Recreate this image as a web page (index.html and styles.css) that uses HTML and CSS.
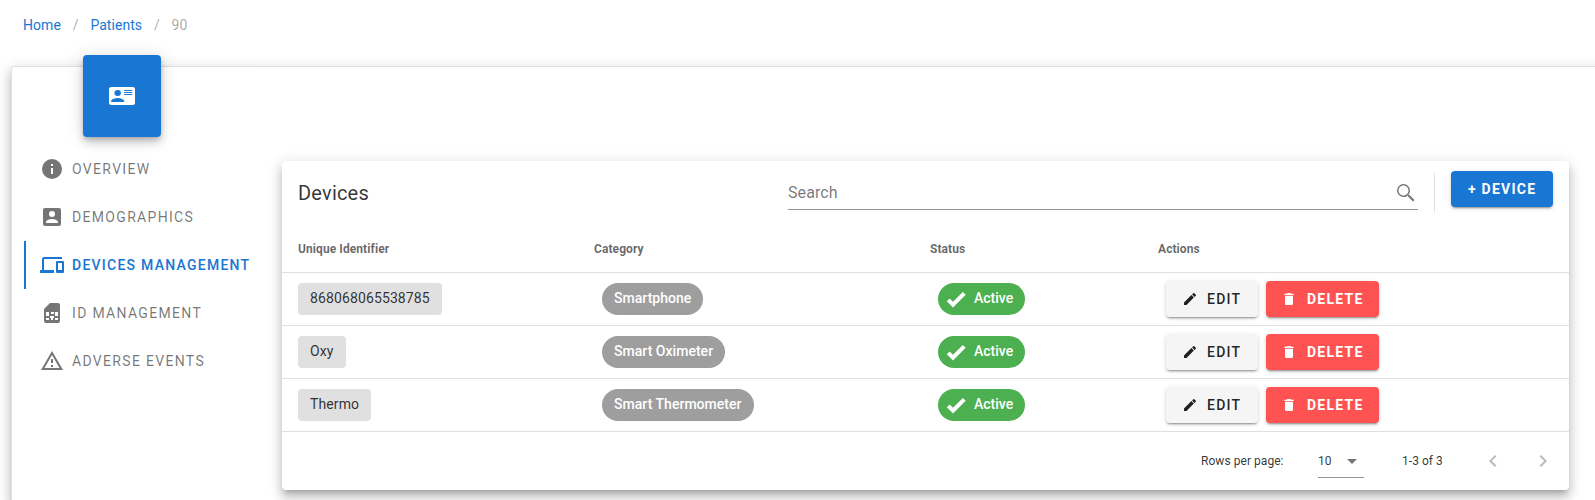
FILE: index.html
```
<!DOCTYPE html>
<html lang="en">
<head>
<meta charset="utf-8">
<title>Devices</title>
<link rel="stylesheet" href="styles.css">
</head>
<body>
<svg class="defs" aria-hidden="true">
  <symbol id="pencil" viewBox="0 0 24 24"><path d="M20.71,7.04C21.1,6.65 21.1,6 20.71,5.63L18.37,3.29C18,2.9 17.35,2.9 16.96,3.29L15.12,5.12L18.87,8.87M3,17.25V21H6.75L17.81,9.93L14.06,6.18L3,17.25Z"/></symbol>
  <symbol id="trash" viewBox="0 0 24 24"><path d="M19,4H15.5L14.5,3H9.5L8.5,4H5V6H19M6,19A2,2 0 0,0 8,21H16A2,2 0 0,0 18,19V7H6V19Z"/></symbol>
  <symbol id="check" viewBox="0 0 24 24"><path d="M9,20.42L2.79,14.21L5.62,11.38L9,14.77L18.88,4.88L21.71,7.71L9,20.42Z"/></symbol>
</svg>
<nav class="crumbs"><a>Home</a><span class="sep">/</span><a>Patients</a><span class="sep">/</span><span class="here">90</span></nav>
<main class="sheet">
  <aside class="side">
    <div class="badge"><svg class="icon" viewBox="0 3 24 18" preserveAspectRatio="none"><path d="M22,3H2C0.91,3.04 0.04,3.91 0,5V19C0.04,20.09 0.91,20.96 2,21H22C23.09,20.96 23.96,20.09 24,19V5C23.96,3.91 23.09,3.04 22,3M8,6A3,3 0 0,1 11,9A3,3 0 0,1 8,12A3,3 0 0,1 5,9A3,3 0 0,1 8,6M14,18H2V17C2,15 6,13.9 8,13.9C10,13.9 14,15 14,17V18M22,12V12M21.5,11H14V10.1H21.5V11M21.5,9H14V8.1H21.5V9M21.5,7H14V6.1H21.5V7Z"/></svg></div>
    <div class="tabs">
      <div class="tab"><svg class="icon" viewBox="0 0 24 24"><path d="M13,9H11V7H13M13,17H11V11H13M12,2A10,10 0 0,0 2,12A10,10 0 0,0 12,22A10,10 0 0,0 22,12A10,10 0 0,0 12,2Z"/></svg>Overview</div>
      <div class="tab"><svg class="icon" viewBox="0 0 24 24"><path d="M6,17C6,15 10,13.9 12,13.9C14,13.9 18,15 18,17V18H6M15,9A3,3 0 0,1 12,12A3,3 0 0,1 9,9A3,3 0 0,1 12,6A3,3 0 0,1 15,9M3,5V19A2,2 0 0,0 5,21H19A2,2 0 0,0 21,19V5A2,2 0 0,0 19,3H5C3.89,3 3,3.9 3,5Z"/></svg>Demographics</div>
      <div class="tab active"><svg class="icon" viewBox="0 0 24 24"><path d="M4,6H22V4H4A2,2 0 0,0 2,6V17H0V20H14V17H4V6M23,8H17A1,1 0 0,0 16,9V19A1,1 0 0,0 17,20H23A1,1 0 0,0 24,19V9A1,1 0 0,0 23,8M22,17H18V10H22V17Z"/></svg>Devices Management</div>
      <div class="tab"><svg class="icon" viewBox="0 0 24 24"><path fill-rule="evenodd" d="M18,2H10L4,8V20A2,2 0 0,0 6,22H18A2,2 0 0,0 20,20V4A2,2 0 0,0 18,2M6,11H9V15H6M11,11H14V13H11M15,11H18V15H15M6,17H9V19H6M10,15H14V17H13V19H11V17H10M15,17H18V19H15Z"/></svg>ID Management</div>
      <div class="tab"><svg class="icon" viewBox="0 0 24 24"><path d="M12,2L1,21H23M12,6L19.53,19H4.47M11,10V14H13V10M11,16V18H13V16"/></svg>Adverse Events</div>
    </div>
  </aside>
  <section class="card">
    <header class="bar">
      <h1>Devices</h1>
      <div class="search"><span>Search</span><svg class="icon" viewBox="0 0 24 24"><path d="M9.5,3A6.5,6.5 0 0,1 16,9.5C16,11.11 15.41,12.59 14.44,13.73L14.71,14H15.5L20.5,19L19,20.5L14,15.5V14.71L13.73,14.44C12.59,15.41 11.11,16 9.5,16A6.5,6.5 0 0,1 3,9.5A6.5,6.5 0 0,1 9.5,3M9.5,4.5C6.8,4.5 4.5,6.8 4.5,9.5C4.5,12.2 6.8,14.5 9.5,14.5C12.2,14.5 14.5,12.2 14.5,9.5C14.5,6.8 12.2,4.5 9.5,4.5Z"/></svg></div>
      <div class="divider"></div>
      <div class="btn primary">+ Device</div>
    </header>
    <div class="row head"><div>Unique Identifier</div><div>Category</div><div>Status</div><div>Actions</div></div>
    <div class="row">
      <div><span class="chip label">868068065538785</span></div>
      <div><span class="chip kind">Smartphone</span></div>
      <div><span class="chip ok"><svg><use href="#check"/></svg>Active</span></div>
      <div class="acts"><span class="btn plain"><svg><use href="#pencil"/></svg>Edit</span><span class="btn danger"><svg><use href="#trash"/></svg>Delete</span></div>
    </div>
    <div class="row">
      <div><span class="chip label">Oxy</span></div>
      <div><span class="chip kind">Smart Oximeter</span></div>
      <div><span class="chip ok"><svg><use href="#check"/></svg>Active</span></div>
      <div class="acts"><span class="btn plain"><svg><use href="#pencil"/></svg>Edit</span><span class="btn danger"><svg><use href="#trash"/></svg>Delete</span></div>
    </div>
    <div class="row">
      <div><span class="chip label">Thermo</span></div>
      <div><span class="chip kind">Smart Thermometer</span></div>
      <div><span class="chip ok"><svg><use href="#check"/></svg>Active</span></div>
      <div class="acts"><span class="btn plain"><svg><use href="#pencil"/></svg>Edit</span><span class="btn danger"><svg><use href="#trash"/></svg>Delete</span></div>
    </div>
    <footer class="foot">
      <span class="per">Rows per page:</span>
      <span class="select">10<svg class="icon" viewBox="0 0 24 24"><path d="M7,10L12,15L17,10H7Z"/></svg></span>
      <span class="range">1-3 of 3</span>
      <svg class="icon nav" viewBox="0 0 24 24"><path d="M15.41,16.58L10.83,12L15.41,7.41L14,6L8,12L14,18L15.41,16.58Z"/></svg>
      <svg class="icon nav" viewBox="0 0 24 24"><path d="M8.59,16.58L13.17,12L8.59,7.41L10,6L16,12L10,18L8.59,16.58Z"/></svg>
    </footer>
  </section>
</main>
</body>
</html>
```
FILE: styles.css
```
* { box-sizing: border-box; }
body {
  margin: 0;
  height: 500px;
  overflow: hidden;
  background: #fff;
  color: rgba(0, 0, 0, .8);
  font: 14px/20px Roboto, sans-serif;
}
svg { fill: currentColor; flex: none; }
.defs { display: none; }
.icon { width: 24px; height: 24px; }
.crumbs { display: flex; height: 66px; padding: 15px 23px 0; color: #1976d2; letter-spacing: .05px; }
.crumbs .sep { width: 29.5px; text-align: center; color: rgba(0, 0, 0, .36); }
.crumbs .here { color: rgba(0, 0, 0, .36); }
.sheet {
  display: flex;
  height: 434px;
  margin-left: 11px;
  margin-right: -20px;
  border: 1px solid rgba(0, 0, 0, .12);
  border-bottom: 0;
  border-radius: 4px 4px 0 0;
  background: #fff;
  box-shadow: 0 5px 5px -3px rgba(0, 0, 0, .2), 0 8px 10px 1px rgba(0, 0, 0, .14), 0 3px 14px 2px rgba(0, 0, 0, .12);
}
.side { width: 270px; flex: none; }
.badge {
  display: flex;
  align-items: center;
  justify-content: center;
  width: 78px;
  height: 82px;
  margin: -12px 0 0 71px;
  border-radius: 4px;
  background: #1976d2;
  color: #fff;
  box-shadow: 0 3px 5px -1px rgba(0, 0, 0, .2), 0 6px 10px rgba(0, 0, 0, .14), 0 1px 18px rgba(0, 0, 0, .12);
}
.badge .icon { width: 26px; height: 18px; }
.tabs { margin: 8px 0 0 12px; }
.tab {
  display: flex;
  align-items: center;
  gap: 8px;
  height: 48px;
  padding-left: 14px;
  border-left: 2px solid transparent;
  color: rgba(0, 0, 0, .54);
  font-weight: 400;
  letter-spacing: 1.32px;
  text-transform: uppercase;
  white-space: nowrap;
}
.active { color: #1976d2; border-color: #1976d2; font-weight: 500; letter-spacing: 1.25px; }
.card {
  width: 1287px;
  height: 329px;
  flex: none;
  margin-top: 94px;
  border-radius: 4px;
  background: #fff;
  box-shadow: 0 5px 5px -3px rgba(0, 0, 0, .2), 0 8px 10px 1px rgba(0, 0, 0, .14), 0 3px 14px 2px rgba(0, 0, 0, .12);
}
.bar { display: flex; height: 64px; padding: 10px 16px 0; }
.bar h1 { width: 490px; margin: 6px 0 0; font-size: 20px; line-height: 32px; font-weight: 400; letter-spacing: .2px; }
.search {
  display: flex;
  justify-content: space-between;
  align-items: center;
  width: 630px;
  height: 39px;
  padding-top: 6px;
  border-bottom: 1px solid rgba(0, 0, 0, .42);
  color: rgba(0, 0, 0, .54);
  font-size: 16px;
  letter-spacing: .1px;
}
.divider { width: 1px; height: 40px; margin: 2px 16px 0; background: rgba(0, 0, 0, .12); }
.btn {
  display: inline-flex;
  align-items: center;
  height: 36px;
  padding: 0 16px;
  border-radius: 4px;
  font-weight: 500;
  letter-spacing: 1.25px;
  text-transform: uppercase;
  white-space: nowrap;
  box-shadow: 0 3px 1px -2px rgba(0, 0, 0, .2), 0 2px 2px rgba(0, 0, 0, .14), 0 1px 5px rgba(0, 0, 0, .12);
}
.btn svg { width: 16px; height: 16px; margin-right: 9px; }
.primary { width: 102px; padding-left: 17px; background: #1976d2; color: #fff; font-weight: 700; }
.plain { width: 92px; background: #f5f5f5; color: rgba(0, 0, 0, .87); }
.danger { width: 113px; padding-left: 15px; background: #ff5252; color: #fff; font-weight: 700; }
.danger svg { margin-right: 10px; }
.row {
  display: grid;
  grid-template-columns: 296px 336px 228px 1fr;
  align-items: center;
  height: 53px;
  border-bottom: 1px solid rgba(0, 0, 0, .12);
}
.row > div { display: flex; align-items: center; padding-left: 16px; }
.head { height: 48px; color: rgba(0, 0, 0, .6); font-size: 12px; font-weight: 700; letter-spacing: .08px; }
.chip {
  display: inline-flex;
  align-items: center;
  height: 32px;
  padding: 0 12px 2px;
  border-radius: 16px;
  white-space: nowrap;
}
.label { border-radius: 4px; background: #e0e0e0; letter-spacing: .12px; }
.kind { margin-left: 8px; background: #9e9e9e; color: #fff; font-weight: 500; letter-spacing: .03px; }
.ok { width: 87px; margin-left: 8px; padding-left: 6px; background: #4caf50; color: #fff; font-weight: 500; }
.ok svg { width: 24px; height: 24px; margin: 2px 6px 0 0; }
.acts { gap: 8px; }
.row > .acts { padding-left: 24px; }
.foot { display: flex; align-items: center; height: 58px; padding-left: 919px; font-size: 12px; letter-spacing: .05px; }
.foot > * { flex: none; }
.per { width: 117px; }
.select {
  display: flex;
  align-items: center;
  justify-content: space-between;
  width: 46px;
  height: 34px;
  border-bottom: 1px solid rgba(0, 0, 0, .42);
}
.select .icon { color: rgba(0, 0, 0, .54); }
.range { width: 79px; margin-left: 38px; }
.nav { color: rgba(0, 0, 0, .27); margin-right: 26px; }
```
